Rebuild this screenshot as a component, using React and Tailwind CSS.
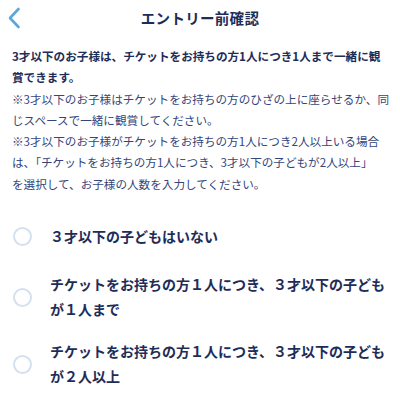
export default function App() {
  const options = [
    { lines: ["３才以下の子どもはいない"], gap: "mt-[29px]" },
    { lines: ["チケットをお持ちの方１人につき、３才以下の子ども", "が１人まで"], gap: "mt-[23px]" },
    { lines: ["チケットをお持ちの方１人につき、３才以下の子ども", "が２人以上"], gap: "mt-[17px]" },
  ];

  return (
    <div
      className="w-[400px] h-[400px] overflow-hidden bg-white text-[#1e2d58]"
      style={{ fontFamily: '"Noto Sans CJK JP", "Noto Sans", sans-serif' }}
    >
      <header className="relative flex h-[36px] items-center justify-center">
        <svg
          className="absolute left-[7px] top-[7px]"
          width="14"
          height="22"
          viewBox="0 0 14 22"
          fill="none"
        >
          <path
            d="M11.5 2 L3 11 L11.5 20"
            stroke="#5ba7dc"
            strokeWidth="2.6"
            strokeLinecap="round"
            strokeLinejoin="round"
          />
        </svg>
        <h1 className="text-[14.5px] font-bold tracking-[0.3px]">エントリー前確認</h1>
      </header>

      <div className="px-[12px] pt-[10px] text-[11.6px] leading-[21.3px] whitespace-nowrap">
        <p className="font-bold">
          3才以下のお子様は、チケットをお持ちの方1人につき1人まで一緒に観
          <br />
          賞できます。
        </p>
        <p className="text-[#34457a]">
          ※3才以下のお子様はチケットをお持ちの方のひざの上に座らせるか、同
          <br />
          じスペースで一緒に観賞してください。
          <br />
          ※3才以下のお子様がチケットをお持ちの方1人につき2人以上いる場合
          <br />
          は、「チケットをお持ちの方1人につき、3才以下の子どもが2人以上」
          <br />
          を選択して、お子様の人数を入力してください。
        </p>
      </div>

      <div className="flex flex-col">
        {options.map((opt, i) => (
          <div key={i} className={`flex items-center pl-[13px] ${opt.gap}`}>
            <span className="h-[19px] w-[19px] shrink-0 rounded-full border-2 border-[#d5e0ef]" />
            <div className="ml-[18px] text-[14px] font-bold leading-[25px] whitespace-nowrap">
              {opt.lines.map((l, j) => (
                <div key={j}>{l}</div>
              ))}
            </div>
          </div>
        ))}
      </div>
    </div>
  );
}
